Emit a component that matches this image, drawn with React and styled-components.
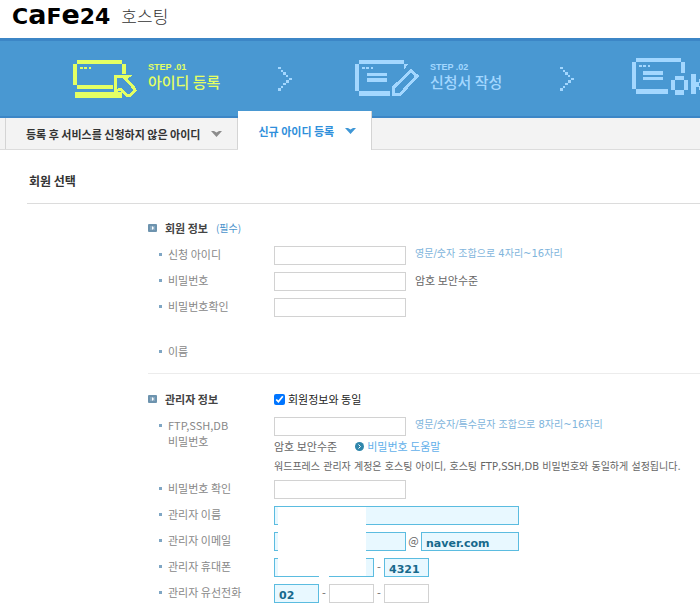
import React, { useState } from "react";
import styled, { createGlobalStyle } from "styled-components";

const YELLOW = "#e4ff63";
const PALE = "#a3d7ff";

const LaptopIcon = () => (
  <svg width="64" height="38" viewBox="0 0 64 38" shapeRendering="crispEdges">
    <g fill={YELLOW}>
      <path d="M4 0h45v4H4zM0 4h4v21H0zM4 25h36v4H4zM49 4h4v10h-4zM2 32h47v6H2z" />
      <path d="M7 7h3v2H7zM11 7h3v2h-3zM16 7h2v2h-2z" />
    </g>
    <path
      d="M42.5 16.500V30.500L48 29.500L54 35.500H57L62 30.500L61 28L52 18.500L55 16.500z"
      fill="#4998d2"
      stroke={YELLOW}
      strokeWidth="3"
    />
  </svg>
);

const FormIcon = () => (
  <svg width="64" height="38" viewBox="0 0 64 38" shapeRendering="crispEdges">
    <g fill={PALE}>
      <path d="M4 0h45v4H4zM0 4h4v27H0zM4 31h31v5H4zM49 4h4l-4 6z" />
      <path d="M7 7h3v2H7zM11 7h3v2h-3zM16 7h2v2h-2zM12 13h20v3H12zM12 18h20v4H12z" />
    </g>
    <path
      d="M38.5 34.500v-7L56 10.500L62 16L45 34.500z"
      fill="#4998d2"
      stroke={PALE}
      strokeWidth="3"
    />
  </svg>
);

const OkIcon = () => (
  <svg width="84" height="42" viewBox="0 0 84 42" shapeRendering="crispEdges">
    <g fill={PALE}>
      <path d="M4 0h45v4H4zM0 4h4v27H0zM4 31h32v5H4zM49 4h4v11h-4z" />
      <path d="M7 7h3v2H7zM11 7h3v2h-3zM16 7h2v2h-2zM11 13h20v4H11zM11 19h20v3H11z" />
      <path d="M43 18h9v4h-9zM39 22h4v10h-4zM52 22h4v10h-4zM43 32h9v5h-9z" />
      <path d="M59 16h5v20h-5zM64 24h3v5h-3zM67 21h4v4h-4zM67 28h4v4h-4zM71 32h4v4h-4z" />
    </g>
  </svg>
);

const ChevronIcon = () => (
  <svg width="14" height="24" viewBox="0 0 14 24" shapeRendering="crispEdges">
    <path
      fill={PALE}
      d="M0 0h3v2H0zM3 3h2v2H3zM5 5h3v3H5zM8 8h2v2H8zM11 11h3v2h-3zM8 13h3v3H8zM5 16h3v2H5zM3 19h2v2H3zM0 21h3v3H0z"
    />
  </svg>
);

const CaretIcon = () => (
  <svg width="11" height="6" viewBox="0 0 11 6">
    <path fill="currentColor" d="M0 0h3l2.5 1.500L8 0h3L5.5 6z" />
  </svg>
);

const SectionIcon = () => (
  <svg width="9" height="8" viewBox="0 0 9 8">
    <rect width="9" height="8" rx="1" fill="#6d93ae" />
    <rect x="2" y="2" width="5" height="4" fill="#88a9c0" />
    <path d="M4 2l2 2l-2 2z" fill="#fff" />
  </svg>
);

const HelpIcon = () => (
  <svg width="9" height="9" viewBox="0 0 9 9">
    <circle cx="4.5" cy="4.5" r="4.5" fill="#2f86ab" />
    <path d="M3.5 2.500l2 2l-2 2" fill="none" stroke="#fff" />
  </svg>
);

const App = () => {
  const [same, setSame] = useState(true);

  return (
    <>
      <GlobalStyle />
      <Header>
        <Logo href="#">
          C<Tall>a</Tall>F<Tall>e</Tall>24
        </Logo>
        <Service>호스팅</Service>
      </Header>

      <Banner>
        <Step $active>
          <LaptopIcon />
          <StepText>
            <StepNumber>STEP .01</StepNumber>
            <StepName>아이디 등록</StepName>
          </StepText>
        </Step>
        <ChevronIcon />
        <Step>
          <FormIcon />
          <StepText>
            <StepNumber>STEP .02</StepNumber>
            <StepName>신청서 작성</StepName>
          </StepText>
        </Step>
        <ChevronIcon />
        <Step>
          <OkIcon />
        </Step>
      </Banner>

      <Tabs>
        <Tab type="button">
          등록 후 서비스를 신청하지 않은 아이디
          <CaretIcon />
        </Tab>
        <Tab type="button" $active>
          신규 아이디 등록
          <CaretIcon />
        </Tab>
      </Tabs>

      <Main>
        <Title>회원 선택</Title>

        <Section>
          <Row>
            <SectionTitle>
              <SectionIcon />
              회원 정보 <Required>(필수)</Required>
            </SectionTitle>
          </Row>
          <Row>
            <Label htmlFor="userId">신청 아이디</Label>
            <Line>
              <Input id="userId" />
              <Hint>영문/숫자 조합으로 4자리~16자리</Hint>
            </Line>
          </Row>
          <Row>
            <Label htmlFor="password">비밀번호</Label>
            <Line>
              <Input id="password" type="password" />
              <Strength>암호 보안수준</Strength>
            </Line>
          </Row>
          <Row>
            <Label htmlFor="passwordCheck">비밀번호확인</Label>
            <Input id="passwordCheck" type="password" />
          </Row>
          <NameRow>
            <Label as="span">이름</Label>
          </NameRow>
        </Section>

        <Section $divided>
          <Row>
            <SectionTitle>
              <SectionIcon />
              관리자 정보
            </SectionTitle>
            <CheckLabel>
              <Checkbox
                type="checkbox"
                checked={same}
                onChange={(ev) => setSame(ev.target.checked)}
              />
              회원정보와 동일
            </CheckLabel>
          </Row>
          <Row>
            <Label htmlFor="ftpPassword">
              FTP,SSH,DB
              <br />
              비밀번호
            </Label>
            <Stack>
              <Line>
                <Input id="ftpPassword" type="password" />
                <Hint>영문/숫자/특수문자 조합으로 8자리~16자리</Hint>
              </Line>
              <Note>
                암호 보안수준
                <HelpLink href="#">
                  <HelpIcon />
                  비밀번호 도움말
                </HelpLink>
              </Note>
              <Note $small>
                워드프레스 관리자 계정은 호스팅 아이디, 호스팅 FTP,SSH,DB
                비밀번호와 동일하게 설정됩니다.
              </Note>
            </Stack>
          </Row>
          <Row>
            <Label htmlFor="ftpPasswordCheck">비밀번호 확인</Label>
            <Input id="ftpPasswordCheck" type="password" />
          </Row>
          <Private>
            <Row>
              <Label htmlFor="adminName">관리자 이름</Label>
              <Input id="adminName" $size="long" $filled />
            </Row>
            <Row>
              <Label htmlFor="email">관리자 이메일</Label>
              <Line>
                <Input id="email" $filled />
                <At>@</At>
                <Input
                  aria-label="이메일 도메인"
                  $size="domain"
                  $filled
                  defaultValue="naver.com"
                />
              </Line>
            </Row>
            <Row>
              <Label htmlFor="mobile">관리자 휴대폰</Label>
              <Line>
                <Input id="mobile" $size="short" $filled />
                <Dash>-</Dash>
                <Input aria-label="휴대폰 가운데 자리" $size="short" $filled />
                <Dash>-</Dash>
                <Input
                  aria-label="휴대폰 끝자리"
                  $size="short"
                  $filled
                  defaultValue="4321"
                />
              </Line>
            </Row>
            <Mask />
          </Private>
          <Row>
            <Label htmlFor="phone">관리자 유선전화</Label>
            <Line>
              <Input id="phone" $size="short" $filled defaultValue="02" />
              <Dash>-</Dash>
              <Input aria-label="유선전화 가운데 자리" $size="short" />
              <Dash>-</Dash>
              <Input aria-label="유선전화 끝자리" $size="short" />
            </Line>
          </Row>
        </Section>
      </Main>
    </>
  );
};

export default App;

const GlobalStyle = createGlobalStyle`
  * {
    box-sizing: border-box;
  }
  body {
    margin: 0;
    overflow-x: hidden;
    background-color: #fff;
    color: #666;
    font-family: "Noto Sans CJK KR", sans-serif;
    font-size: 11px;
    line-height: 16px;
  }
  svg {
    display: block;
    flex: none;
  }
`;

const Header = styled.header`
  display: flex;
  align-items: center;
  gap: 11px;
  height: 38px;
  padding: 0 12px 6px;
`;

const Logo = styled.a`
  font-family: "DejaVu Sans", sans-serif;
  font-size: 22px;
  font-weight: bold;
  line-height: 32px;
  color: #000;
  text-decoration: none;
`;

const Tall = styled.span`
  font-size: 27px;
`;

const Service = styled.span`
  font-size: 17px;
  font-weight: 300;
  line-height: 32px;
  color: #333;
`;

const Banner = styled.div`
  display: grid;
  grid-template-columns: 205px 77px 205px 72px auto;
  align-items: center;
  height: 80px;
  padding-left: 73px;
  overflow: hidden;
  background-color: #4998d2;
  border-top: 3px solid #3c86c6;
  border-bottom: 2px solid #3c86c6;
`;

const Step = styled.div`
  display: flex;
  align-items: center;
  gap: 11px;
  color: ${(props) => (props.$active ? YELLOW : PALE)};
`;

const StepText = styled.div`
  display: flex;
  flex-direction: column;
  padding-bottom: 3px;
`;

const StepNumber = styled.span`
  font-family: "Liberation Sans", sans-serif;
  font-size: 9px;
  font-weight: bold;
  line-height: 10px;
`;

const StepName = styled.span`
  font-size: 15px;
  font-weight: 500;
  line-height: 20px;
  white-space: nowrap;
`;

const Tabs = styled.nav`
  display: flex;
  align-items: flex-end;
  height: 32px;
  padding-left: 5px;
  background-color: #f3f3f3;
  border-bottom: 1px solid #dcdcdc;
`;

const Tab = styled.button`
  display: flex;
  align-items: center;
  gap: 11px;
  flex: none;
  height: ${(props) => (props.$active ? "39px" : "31px")};
  margin-bottom: ${(props) => (props.$active ? "-1px" : "0")};
  padding: 0 15px 0 20px;
  border: solid #d4d4d4;
  border-width: ${(props) => (props.$active ? "0 1px 0 0" : "0 1px")};
  background-color: ${(props) => (props.$active ? "#fff" : "transparent")};
  color: ${(props) => (props.$active ? "#2f8fdb" : "#333")};
  font-family: inherit;
  font-size: 11px;
  font-weight: bold;
  cursor: pointer;
  svg {
    color: ${(props) => (props.$active ? "#3f97d6" : "#8c8c8c")};
  }
`;

const Main = styled.main`
  padding: 21px 0 0 27px;
`;

const Title = styled.h1`
  margin: 0;
  padding: 0 2px 12px;
  border-bottom: 1px solid #dcdcdc;
  font-size: 12px;
  line-height: 20px;
  color: #333;
`;

const Section = styled.section`
  margin-left: 121px;
  padding-top: ${(props) => (props.$divided ? "17px" : "16px")};
  border-top: ${(props) => (props.$divided ? "1px solid #ececec" : "0")};
`;

const Row = styled.div`
  display: grid;
  grid-template-columns: 126px 1fr;
  align-items: start;
  min-height: 26px;
`;

const NameRow = styled(Row)`
  margin-top: 19px;
  min-height: 30px;
`;

const SectionTitle = styled.h2`
  display: flex;
  align-items: center;
  gap: 8px;
  margin: 0;
  font-size: 11px;
  line-height: 16px;
  color: #444;
`;

const Required = styled.span`
  font-size: 10px;
  font-weight: normal;
  color: #4c94cc;
`;

const Label = styled.label`
  padding-left: 20px;
  background: linear-gradient(#7fa6c4, #7fa6c4) 11px 7px / 3px 3px no-repeat;
  color: #888;
`;

const Line = styled.div`
  display: flex;
`;

const Stack = styled.div`
  display: grid;
  row-gap: 1px;
  padding-bottom: 4px;
`;

const widths = { long: "245px", domain: "98px", short: "45px" };

const Input = styled.input`
  width: ${(props) => widths[props.$size] || "132px"};
  height: 19px;
  padding: 3px 4px 0;
  border: 1px solid ${(props) => (props.$filled ? "#5bbce0" : "#d2d2d2")};
  border-radius: 0;
  background-color: ${(props) => (props.$filled ? "#e8f8ff" : "#fff")};
  font-family: "DejaVu Sans", sans-serif;
  font-size: 11px;
  font-weight: bold;
  color: #16698c;
  &:focus {
    outline: none;
    border-color: #2f86ab;
  }
`;

const Hint = styled.span`
  margin-left: 9px;
  font-family: "DejaVu Sans", "Noto Sans CJK KR", sans-serif;
  font-size: 10px;
  color: #7fb5dc;
`;

const Strength = styled.span`
  margin-left: 9px;
`;

const Note = styled.p`
  display: flex;
  margin: 0;
  font-family: ${(props) =>
    props.$small ? `"DejaVu Sans", "Noto Sans CJK KR", sans-serif` : "inherit"};
  font-size: ${(props) => (props.$small ? "10px" : "11px")};
  line-height: 19px;
  white-space: nowrap;
`;

const HelpLink = styled.a`
  display: flex;
  align-items: center;
  gap: 3px;
  margin-left: 18px;
  color: #62b0ea;
  text-decoration: none;
`;

const CheckLabel = styled.label`
  display: flex;
  align-items: center;
  gap: 3px;
  color: #222;
`;

const Checkbox = styled.input`
  width: 11px;
  height: 11px;
  margin: 0;
  accent-color: #0075ff;
`;

const At = styled.span`
  width: 15px;
  text-align: center;
`;

const Dash = styled.span`
  width: 10px;
  text-align: center;
`;

const Private = styled.div`
  position: relative;
`;

const Mask = styled.div`
  position: absolute;
  top: 1px;
  left: 130px;
  width: 88px;
  height: 69px;
  background-color: #fff;
`;
